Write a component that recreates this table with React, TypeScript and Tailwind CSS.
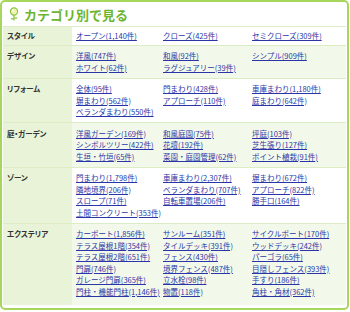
const rows: { label: string; items: string[] }[] = [
  { label: 'スタイル', items: ['オープン(1,140件)', 'クローズ(425件)', 'セミクローズ(309件)'] },
  {
    label: 'デザイン',
    items: ['洋風(747件)', '和風(92件)', 'シンプル(909件)', 'ホワイト(62件)', 'ラグジュアリー(39件)'],
  },
  {
    label: 'リフォーム',
    items: [
      '全体(95件)',
      '門まわり(428件)',
      '車庫まわり(1,180件)',
      '塀まわり(562件)',
      'アプローチ(110件)',
      '庭まわり(642件)',
      'ベランダまわり(550件)',
    ],
  },
  {
    label: '庭・ガーデン',
    items: [
      '洋風ガーデン(169件)',
      '和風庭園(75件)',
      '坪庭(103件)',
      'シンボルツリー(422件)',
      '花壇(192件)',
      '芝生張り(127件)',
      '生垣・竹垣(65件)',
      '菜園・庭園管理(62件)',
      'ポイント植栽(91件)',
    ],
  },
  {
    label: 'ゾーン',
    items: [
      '門まわり(1,798件)',
      '車庫まわり(2,307件)',
      '塀まわり(672件)',
      '隣地境界(206件)',
      'ベランダまわり(707件)',
      'アプローチ(822件)',
      'スロープ(71件)',
      '自転車置場(206件)',
      '勝手口(164件)',
      '土間コンクリート(353件)',
    ],
  },
  {
    label: 'エクステリア',
    items: [
      'カーポート(1,856件)',
      'サンルーム(351件)',
      'サイクルポート(170件)',
      'テラス屋根1階(354件)',
      'タイルデッキ(391件)',
      'ウッドデッキ(242件)',
      'テラス屋根2階(651件)',
      'フェンス(430件)',
      'パーゴラ(65件)',
      '門扉(746件)',
      '境界フェンス(487件)',
      '目隠しフェンス(393件)',
      'ガレージ門扉(365件)',
      '立水栓(98件)',
      '手すり(186件)',
      '門柱・機能門柱(1,146件)',
      '物置(118件)',
      '角柱・角材(362件)',
    ],
  },
];

const font = "font-['Noto_Sans_CJK_JP',sans-serif]";

const SproutIcon = () => (
  <svg width="10" height="15" viewBox="0 0 10 15">
    <circle cx="5" cy="4.5" r="3.6" fill="#eef3b0" stroke="#8cc63f" strokeWidth="1.2" />
    <circle cx="4" cy="3.6" r="1.1" fill="#fff" />
    <path d="M5 8.2 V13.5" stroke="#7dbb32" strokeWidth="1.2" />
    <path d="M5 12 C3.5 10.5 2 11 1.5 12 C3 12.8 4.2 12.6 5 12 Z" fill="#8cc63f" />
    <path d="M5 11.2 C6.5 9.8 8 10.2 8.5 11.2 C7 12 5.8 11.8 5 11.2 Z" fill="#8cc63f" />
  </svg>
);

export default function App() {
  return (
    <div className={`w-[350px] h-[312px] bg-white ${font}`}>
      <div className="w-[349px] rounded-[5px] border-2 border-[#a6d65c] px-px pb-[3px]">
        <div className="flex items-center h-[24px] pl-[6px] gap-[5px]">
          <SproutIcon />
          <h2 className="text-[13px] font-bold text-[#6cb52d] leading-none">カテゴリ別で見る</h2>
        </div>
        {rows.map((row, i) => {
          const pad =
            i === 0 ? 'py-[3px]' : i === rows.length - 1 ? 'pt-[4.5px] pb-[8px]' : 'py-[4.5px]';
          return (
            <div key={row.label} className="flex border-t border-[#dcedc6]">
              <div
                className={`w-[69px] shrink-0 bg-[#e8f3d7] pl-[4px] text-[7.5px] leading-[11.5px] font-bold text-[#333] [font-feature-settings:'palt'] ${pad}`}
              >
                {row.label}
              </div>
              <div
                className={`flex-1 grid grid-cols-[87px_89px_1fr] pl-[4px] ${
                  i % 2 === 1 ? 'bg-[#f3f9ea]' : 'bg-white'
                } ${pad}`}
              >
                {row.items.map((item) => (
                  <a
                    key={item}
                    href="#"
                    className="text-[7.5px] leading-[11.5px] text-[#2a36a8] underline whitespace-nowrap"
                  >
                    {item}
                  </a>
                ))}
              </div>
            </div>
          );
        })}
      </div>
    </div>
  );
}
